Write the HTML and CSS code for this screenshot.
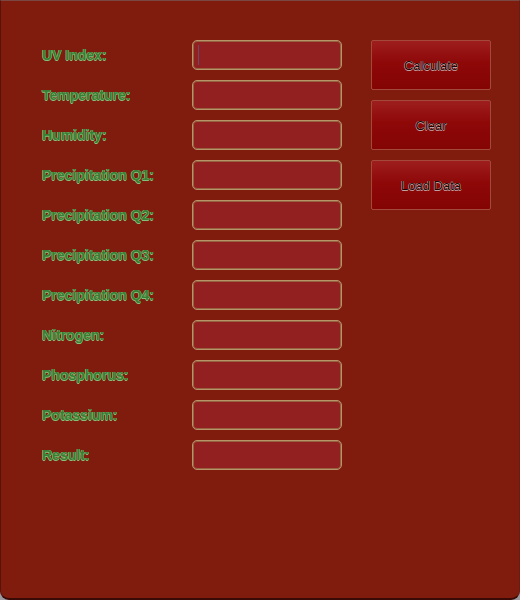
FILE: index.html
```html
<!DOCTYPE html>
<html>
<head>
<meta charset="utf-8">
<link rel="stylesheet" href="styles.css">
</head>
<body>
<div class="window">
  <div class="layout">
    <div class="form">
      <div class="label">UV Index:</div><div class="field first"><span class="caret"></span></div>
      <div class="label">Temperature:</div><div class="field"></div>
      <div class="label">Humidity:</div><div class="field"></div>
      <div class="label">Precipitation Q1:</div><div class="field"></div>
      <div class="label">Precipitation Q2:</div><div class="field"></div>
      <div class="label">Precipitation Q3:</div><div class="field"></div>
      <div class="label">Precipitation Q4:</div><div class="field"></div>
      <div class="label">Nitrogen:</div><div class="field"></div>
      <div class="label">Phosphorus:</div><div class="field"></div>
      <div class="label">Potassium:</div><div class="field"></div>
      <div class="label">Result:</div><div class="field"></div>
    </div>
    <div class="buttons">
      <div class="btn">Calculate</div>
      <div class="btn">Clear</div>
      <div class="btn">Load Data</div>
    </div>
  </div>
</div>
</body>
</html>
```
FILE: styles.css
```css
html, body {
  margin: 0;
  padding: 0;
  background: #9a9aa0;
}
.window {
  box-sizing: border-box;
  width: 520px;
  height: 600px;
  background: #7f1c0e;
  border-top: 1px solid #7a4842;
  border-left: 1px solid #5a1208;
  border-right: 1px solid #6e1a0e;
  border-bottom: 2px solid #3a0a06;
  border-radius: 0 0 9px 9px;
  font-family: "Liberation Sans", Arial, sans-serif;
}
.layout {
  display: flex;
  gap: 29px;
  padding: 39px 0 0 41px;
}
.form {
  display: grid;
  grid-template-columns: 150px 150px;
  grid-auto-rows: 30px;
  row-gap: 10px;
}
.label {
  display: flex;
  align-items: center;
  font-size: 14px;
  font-weight: bold;
  color: #3a7e34;
  text-shadow: 0.5px 0 0 #84c27c, -0.5px 0 0 #84c27c, 0 0.5px 0 #84c27c, 0 -0.5px 0 #84c27c;
}
.field {
  box-sizing: border-box;
  height: 30px;
  background: #922020;
  border: 1px solid #b8946a;
  box-shadow: inset 0 0 0 1px #97603e;
  border-radius: 5px;
  position: relative;
}
.caret {
  position: absolute;
  left: 5px;
  top: 4px;
  width: 1px;
  height: 20px;
  background: #6a4a6a;
}
.buttons {
  display: flex;
  flex-direction: column;
  gap: 10px;
}
.btn {
  box-sizing: border-box;
  width: 120px;
  height: 50px;
  display: flex;
  align-items: center;
  justify-content: center;
  background: linear-gradient(#9e1e1e 0%, #8e0808 45%, #840404 100%);
  border: 1px solid #a5483c;
  border-radius: 2px;
  font-size: 13px;
  color: #1e0606;
  text-shadow: 0.5px 0 0 #c0a0a0, -0.5px 0 0 #c0a0a0, 0 0.5px 0 #c0a0a0, 0 -0.5px 0 #c0a0a0;
}
```
